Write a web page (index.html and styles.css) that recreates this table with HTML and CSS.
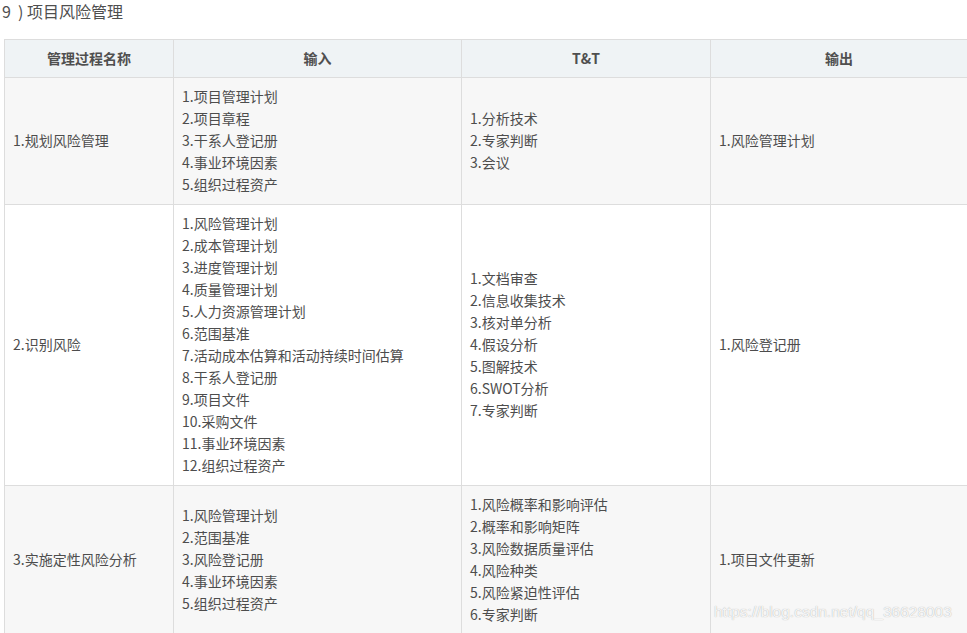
FILE: index.html
```html
<!DOCTYPE html>
<html lang="zh">
<head>
<meta charset="utf-8">
<link rel="stylesheet" href="styles.css">
</head>
<body>
<p class="title">9&nbsp;&nbsp;)&nbsp;项目风险管理</p>
<div class="wrap">
<table class="grid">
  <colgroup>
    <col class="c1"><col class="c2"><col class="c3"><col class="c4">
  </colgroup>
  <thead>
    <tr><th>管理过程名称</th><th>输入</th><th>T&amp;T</th><th>输出</th></tr>
  </thead>
  <tbody>
    <tr class="odd">
      <td>1.规划风险管理</td>
      <td>1.项目管理计划<br>2.项目章程<br>3.干系人登记册<br>4.事业环境因素<br>5.组织过程资产</td>
      <td>1.分析技术<br>2.专家判断<br>3.会议</td>
      <td>1.风险管理计划</td>
    </tr>
    <tr>
      <td>2.识别风险</td>
      <td>1.风险管理计划<br>2.成本管理计划<br>3.进度管理计划<br>4.质量管理计划<br>5.人力资源管理计划<br>6.范围基准<br>7.活动成本估算和活动持续时间估算<br>8.干系人登记册<br>9.项目文件<br>10.采购文件<br>11.事业环境因素<br>12.组织过程资产</td>
      <td>1.文档审查<br>2.信息收集技术<br>3.核对单分析<br>4.假设分析<br>5.图解技术<br>6.SWOT分析<br>7.专家判断</td>
      <td>1.风险登记册</td>
    </tr>
    <tr class="odd">
      <td>3.实施定性风险分析</td>
      <td>1.风险管理计划<br>2.范围基准<br>3.风险登记册<br>4.事业环境因素<br>5.组织过程资产</td>
      <td>1.风险概率和影响评估<br>2.概率和影响矩阵<br>3.风险数据质量评估<br>4.风险种类<br>5.风险紧迫性评估<br>6.专家判断</td>
      <td>1.项目文件更新</td>
    </tr>
  </tbody>
</table>
<span class="mark">https://blog.csdn.net/qq_36628003</span>
</div>
</body>
</html>
```
FILE: styles.css
```css
html, body {
  margin: 0;
  padding: 0;
  background: #fff;
  overflow: hidden;
}
body {
  font-family: "Noto Sans CJK SC", "Noto Sans", sans-serif;
  color: #4d4d4d;
  font-size: 14px;
}
.title {
  margin: 0;
  padding: 0 0 0 2px;
  height: 24px;
  font-size: 16px;
  line-height: 23px;
  color: #4f4f4f;
}
.wrap {
  position: relative;
  margin: 15px 0 0 4px;
  width: 963px;
}
.grid {
  border-collapse: collapse;
  width: 963px;
  table-layout: fixed;
}
.c1 { width: 169px; }
.c2 { width: 288px; }
.c3 { width: 249px; }
.c4 { width: 257px; }
.grid th, .grid td {
  border: 1px solid #ddd;
  padding: 8px 8px;
  line-height: 22px;
  vertical-align: middle;
  text-align: left;
  font-weight: normal;
}
.grid th {
  background: #eff3f5;
  text-align: center;
  font-weight: bold;
  color: #4f4f4f;
  padding: 7px 8px 8px;
}
.grid tbody td {
  padding: 7px 8px 9px;
}
.grid tr.odd td {
  background: #f7f7f7;
}
.mark {
  position: absolute;
  left: 710px;
  top: 564px;
  font-family: "Liberation Sans", Arial, sans-serif;
  font-size: 15.5px;
  color: rgba(255,255,255,0.9);
  text-shadow: 0 0 1px rgba(0,0,0,0.35);
}
```
